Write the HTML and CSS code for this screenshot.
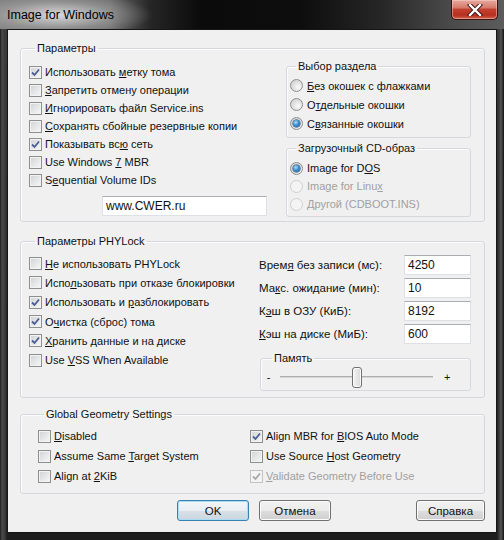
FILE: index.html
```html
<!DOCTYPE html>
<html lang="ru">
<head>
  <meta charset="UTF-8">
  <title>Image for Windows</title>
  <link rel="stylesheet" href="styles.css">
</head>
<body>
  <div class="window">
    <div class="titlebar">
      <span class="title">Image for Windows</span>
      <div class="close">
        <svg width="16" height="12" viewBox="0 0 16 12">
          <path d="M3 1 L13 11 M13 1 L3 11" stroke="#3a1210" stroke-width="4.2" stroke-linecap="square"/>
          <path d="M3 1 L13 11 M13 1 L3 11" stroke="#fff" stroke-width="2.4" stroke-linecap="square"/>
        </svg>
      </div>
    </div>

    <div class="client">
      <!-- Параметры -->
      <fieldset class="group main">
        <legend>Параметры</legend>
        <div class="cols">
          <div class="opts">
            <div class="cb on"><span class="box"><svg viewBox="0 0 11 11"><path d="M2 5.5 L4.5 8 L9 2.5"/></svg></span><span>Использовать <u>м</u>етку тома</span></div>
            <div class="cb"><span class="box"></span><span><u>З</u>апретить отмену операции</span></div>
            <div class="cb"><span class="box"></span><span><u>И</u>гнорировать файл Service.ins</span></div>
            <div class="cb"><span class="box"></span><span><u>С</u>охранять сбойные резервные копии</span></div>
            <div class="cb on"><span class="box"><svg viewBox="0 0 11 11"><path d="M2 5.5 L4.5 8 L9 2.5"/></svg></span><span>Показывать вс<u>ю</u> сеть</span></div>
            <div class="cb"><span class="box"></span><span>Use Windows <u>7</u> MBR</span></div>
            <div class="cb"><span class="box"></span><span>S<u>e</u>quential Volume IDs</span></div>
            <div class="edit site">www.CWER.ru</div>
          </div>

          <div class="side">
            <fieldset class="group sub">
              <legend>Выбор раздела</legend>
              <div class="rb"><span class="dot"></span><span><u>Б</u>ез окошек с флажками</span></div>
              <div class="rb"><span class="dot"></span><span>О<u>т</u>дельные окошки</span></div>
              <div class="rb on"><span class="dot"></span><span>С<u>в</u>язанные окошки</span></div>
            </fieldset>
            <fieldset class="group sub boot">
              <legend>Загрузочный CD-образ</legend>
              <div class="rb on"><span class="dot"></span><span>Image for D<u>O</u>S</span></div>
              <div class="rb off"><span class="dot"></span><span>Image for Linu<u>x</u></span></div>
              <div class="rb off"><span class="dot"></span><span><u>Д</u>ругой (CDBOOT.INS)</span></div>
            </fieldset>
          </div>
        </div>
      </fieldset>

      <!-- Параметры PHYLock -->
      <fieldset class="group phy">
        <legend>Параметры PHYLock</legend>
        <div class="cols">
          <div class="opts">
            <div class="cb"><span class="box"></span><span><u>Н</u>е использовать PHYLock</span></div>
            <div class="cb"><span class="box"></span><span>Испо<u>л</u>ьзовать при отказе блокировки</span></div>
            <div class="cb on"><span class="box"><svg viewBox="0 0 11 11"><path d="M2 5.5 L4.5 8 L9 2.5"/></svg></span><span>Использовать и <u>р</u>азблокировать</span></div>
            <div class="cb on"><span class="box"><svg viewBox="0 0 11 11"><path d="M2 5.5 L4.5 8 L9 2.5"/></svg></span><span>О<u>ч</u>истка (сброс) тома</span></div>
            <div class="cb on"><span class="box"><svg viewBox="0 0 11 11"><path d="M2 5.5 L4.5 8 L9 2.5"/></svg></span><span><u>Х</u>ранить данные и на диске</span></div>
            <div class="cb"><span class="box"></span><span>Use <u>V</u>SS When Available</span></div>
          </div>

          <div class="fields">
            <div class="field"><span>Врем<u>я</u> без записи (мс):</span><div class="edit num">4250</div></div>
            <div class="field"><span>Ма<u>к</u>с. ожидание (мин):</span><div class="edit num">10</div></div>
            <div class="field"><span>К<u>э</u>ш в ОЗУ (КиБ):</span><div class="edit num">8192</div></div>
            <div class="field"><span><u>К</u>эш на диске (МиБ):</span><div class="edit num">600</div></div>
            <fieldset class="group memory">
              <legend>Память</legend>
              <div class="slider">
                <span class="sign">-</span>
                <div class="track"><span class="thumb"></span></div>
                <span class="sign">+</span>
              </div>
            </fieldset>
          </div>
        </div>
      </fieldset>

      <!-- Global Geometry Settings -->
      <fieldset class="group geo">
        <legend>Global Geometry Settings</legend>
        <div class="grid">
          <div class="cb"><span class="box"></span><span><u>D</u>isabled</span></div>
          <div class="cb on"><span class="box"><svg viewBox="0 0 11 11"><path d="M2 5.5 L4.5 8 L9 2.5"/></svg></span><span>Align MBR for <u>B</u>IOS Auto Mode</span></div>
          <div class="cb"><span class="box"></span><span>Assume Same <u>T</u>arget System</span></div>
          <div class="cb"><span class="box"></span><span>Use Source <u>H</u>ost Geometry</span></div>
          <div class="cb"><span class="box"></span><span>Align at <u>2</u>KiB</span></div>
          <div class="cb on off"><span class="box"><svg viewBox="0 0 11 11"><path d="M2 5.5 L4.5 8 L9 2.5"/></svg></span><span><u>V</u>alidate Geometry Before Use</span></div>
        </div>
      </fieldset>

      <div class="buttons">
        <div class="btn default">OK</div>
        <div class="btn">Отмена</div>
        <div class="btn help">Справка</div>
      </div>
    </div>
  </div>
</body>
</html>
```

FILE: styles.css
```css
html, body {
  margin: 0;
  padding: 0;
  background: #fff;
}
body {
  font-family: 'Liberation Sans', Arial, sans-serif;
  font-size: 11px;
  color: #111;
}
u {
  text-decoration-thickness: 1px;
  text-underline-offset: 1px;
}

/* window frame */
.window {
  width: 504px;
  height: 540px;
  box-sizing: border-box;
  display: flex;
  flex-direction: column;
  background:
    linear-gradient(90deg, #1c1c1c 0, #4a4a4a 2px, #3a3a3a 5px, transparent 7px, transparent 497px, #3a3a3a 499px, #555 501px, #111 504px),
    linear-gradient(180deg, #3c3c3c 0, #262626 40%, #1e1e1e 100%);
}
.titlebar {
  height: 29px;
  flex: none;
  display: flex;
  align-items: flex-start;
  background:
    radial-gradient(ellipse 95px 22px at 58px 15px, rgba(235,235,235,0.85), rgba(200,200,200,0.35) 60%, rgba(0,0,0,0) 100%),
    linear-gradient(90deg, #7c7c7c 0, #6a6a6a 110px, #262626 150px, #0b0b0b 200px, #0d0d0d 300px, #262626 380px, #4a4a4a 450px, #5c5c5c 504px);
}
.title {
  font-family: 'Liberation Sans', Arial, sans-serif;
  font-size: 12.5px;
  padding: 8px 0 0 7px;
  color: #000;
}
.close {
  margin-left: auto;
  margin-right: 6px;
  width: 47px;
  height: 20px;
  box-sizing: border-box;
  border: 1px solid #3a1310;
  border-top: none;
  border-radius: 0 0 5px 5px;
  background: linear-gradient(180deg, #e6a99e 0, #d77b6c 40%, #c2402f 50%, #b8301f 80%, #d0634f 100%);
  box-shadow: inset 0 0 0 1px rgba(255,220,210,0.45);
  display: flex;
  align-items: center;
  justify-content: center;
}

/* client area */
.client {
  flex: 1;
  margin: 0 7px 7px 7px;
  border: 1px solid #161616;
  background: #f0f0f0;
  padding: 12px 11px 0 12px;
  display: flex;
  flex-direction: column;
}

/* group boxes */
.group {
  margin: 0;
  border: 1px solid #d5d9dd;
  border-radius: 3px;
  padding: 0;
  box-shadow: inset 1px 1px 0 #fcfcfc;
}
.group legend {
  margin-left: 6px;
  padding: 0 2px;
  line-height: 13px;
}
.cols {
  display: flex;
}
.main {
  padding: 0 13px 4px 8px;
}
.main .opts {
  width: 257px;
  padding-top: 8px;
}
.side {
  width: 185px;
  padding-top: 5px;
  display: flex;
  flex-direction: column;
  gap: 4px;
}
.sub {
  padding: 3px 0 4px 3px;
}
.sub .rb {
  height: 19px;
}
.boot {
  padding: 4px 0 3px 3px;
}
.boot .rb {
  height: 18px;
}

/* checkboxes */
.cb {
  display: flex;
  align-items: center;
  height: 18px;
  white-space: nowrap;
}
.box {
  width: 13px;
  height: 13px;
  box-sizing: border-box;
  flex: none;
  margin-right: 3px;
  border: 1px solid #8e8f8f;
  background: linear-gradient(135deg, #cfd1d4 0, #e4e5e6 50%, #f8f8f8 100%);
  box-shadow: inset 0 0 0 1px #f2f2f2;
  display: flex;
  align-items: center;
  justify-content: center;
}
.box svg {
  width: 11px;
  height: 11px;
}
.box path {
  fill: none;
  stroke: #4a5c92;
  stroke-width: 1.8;
}
.cb.off {
  color: #a0a0a0;
}
.cb.off .box {
  border-color: #c4c4c4;
  background: #f4f4f4;
}
.cb.off .box path {
  stroke: #a7a7a7;
}

/* radio buttons */
.rb {
  display: flex;
  align-items: center;
  white-space: nowrap;
}
.dot {
  width: 13px;
  height: 13px;
  box-sizing: border-box;
  flex: none;
  margin-right: 4px;
  border-radius: 50%;
  border: 1px solid #8e8f8f;
  background: radial-gradient(circle at 65% 65%, #fbfbfb 0, #e2e2e2 45%, #c9cacb 100%);
  display: flex;
  align-items: center;
  justify-content: center;
}
.rb.on .dot::after {
  content: '';
  width: 7px;
  height: 7px;
  border-radius: 50%;
  background: radial-gradient(circle at 40% 35%, #b3e0f8 0, #3a8fd0 45%, #134a8c 100%);
  box-shadow: 0 0 0 0.5px #1f3f6a;
}
.rb.off {
  color: #a0a0a0;
}
.rb.off .dot {
  border-color: #cfcfcf;
  background: #f4f4f4;
}

/* edit boxes */
.edit {
  box-sizing: border-box;
  height: 20px;
  background: #fff;
  border: 1px solid #dde1e6;
  border-top-color: #abadb3;
  padding: 2px 3px 0;
  line-height: 15px;
  font-size: 12px;
}
.site {
  width: 165px;
  margin: 7px 0 0 73px;
}
.num {
  width: 67px;
}

/* PHYLock */
.phy {
  margin-top: 13px;
  padding: 6px 13px 6px 8px;
}
.phy .opts {
  width: 230px;
}
.phy .cb {
  height: 19.3px;
}
.fields {
  flex: 1;
  padding-top: 1px;
  display: flex;
  flex-direction: column;
  gap: 3px;
}
.field {
  display: flex;
  align-items: center;
  justify-content: space-between;
  font-size: 11.5px;
}
.memory {
  margin: 5px 0 0 1px;
  padding: 1px 0 3px 5px;
}
.slider {
  display: flex;
  align-items: center;
  height: 21px;
}
.sign {
  width: 5px;
  text-align: center;
}
.track {
  position: relative;
  width: 153px;
  height: 2px;
  margin: 0 11px 0 9px;
  background: #d6d6d6;
  border-top: 1px solid #b0b0b0;
  box-sizing: border-box;
}
.thumb {
  position: absolute;
  left: 72px;
  top: -10px;
  width: 10px;
  height: 21px;
  box-sizing: border-box;
  border: 1px solid #707070;
  border-radius: 3px;
  background: linear-gradient(90deg, #f4f4f4 0, #e6e6e6 50%, #d8d8d8 100%);
  box-shadow: inset 0 0 0 1px #fbfbfb;
}

/* geometry */
.geo {
  margin-top: 10px;
  padding: 5px 0 7px 17px;
}
.grid {
  display: grid;
  grid-template-columns: 212px 1fr;
}
.geo .cb {
  height: 20px;
}

/* buttons */
.buttons {
  display: flex;
  margin-top: 6px;
  padding-left: 157px;
  gap: 10px;
}
.btn {
  width: 72px;
  height: 21px;
  box-sizing: border-box;
  border: 1px solid #707070;
  border-radius: 3px;
  background: linear-gradient(180deg, #f2f2f2 0, #ebebeb 50%, #dddddd 51%, #cfcfcf 100%);
  box-shadow: inset 0 0 0 1px #fcfcfc;
  display: flex;
  align-items: center;
  justify-content: center;
  font-size: 11.5px;
}
.btn.default {
  border-color: #3c7fb1;
  box-shadow: inset 0 0 0 1px #a8dcf5;
  background: linear-gradient(180deg, #f1f6f9 0, #e8eef2 50%, #d8e1e7 51%, #cbd6de 100%);
}
.btn.help {
  margin-left: auto;
  width: 69px;
}
```
